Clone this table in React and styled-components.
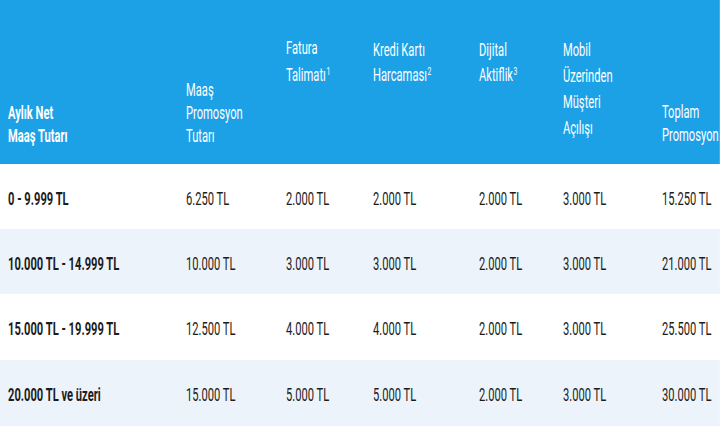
import React from "react";
import styled, { createGlobalStyle } from "styled-components";

const Global = createGlobalStyle`
  html, body { margin: 0; padding: 0; background: #ffffff; overflow: hidden; }
  body { font-family: "Roboto", "Liberation Sans", sans-serif; }
`;

/* the reference type is a tall, strongly condensed face: the whole table is
   laid out at a wider width and squeezed horizontally */
const SQUEEZE = 0.62;
const px = (v) => `${(v / SQUEEZE).toFixed(2)}px`;
const COLS = [186, 100, 87, 106, 84, 99, 58].map(px).join(" ");

const Page = styled.div`
  width: 720px;
  height: 430px;
  overflow: hidden;
  background: #ffffff;
`;

const Table = styled.div`
  width: ${px(720)};
  transform: scaleX(${SQUEEZE});
  transform-origin: 0 0;
`;

const HeaderRow = styled.div`
  display: grid;
  grid-template-columns: ${COLS};
  height: 164px;
  background: #1ca1e7;
  color: #ffffff;
`;

const HeadCell = styled.div`
  padding-top: ${(p) => p.$top}px;
  padding-left: ${(p) => (p.$first ? px(8) : 0)};
  font-size: 18px;
  line-height: ${(p) => p.$lh || 25}px;
  font-weight: ${(p) => (p.$first ? 700 : 400)};
  white-space: nowrap;
`;

const Sup = styled.sup`
  font-size: 11px;
  line-height: 0;
  vertical-align: 6px;
  margin-left: 1px;
`;

const BodyRow = styled.div`
  display: grid;
  grid-template-columns: ${COLS};
  height: ${(p) => p.$h}px;
  align-items: center;
  background: ${(p) => (p.$alt ? "#edf3fa" : "#ffffff")};
  color: #1c1c1c;
`;

const Cell = styled.div`
  padding-left: ${(p) => (p.$first ? px(8) : 0)};
  padding-top: 3px;
  font-size: 18px;
  font-weight: ${(p) => (p.$first ? 700 : 400)};
  white-space: nowrap;
`;

const headers = [
  { lines: ["Aylık Net", "Maaş Tutarı"], top: 101, lh: 23, first: true },
  { lines: ["Maaş", "Promosyon", "Tutarı"], top: 78, lh: 23 },
  { lines: ["Fatura", ["Talimatı", "1"]], top: 34, lh: 27 },
  { lines: ["Kredi Kartı", ["Harcaması", "2"]], top: 37, lh: 25 },
  { lines: ["Dijital", ["Aktiflik", "3"]], top: 37, lh: 25 },
  { lines: ["Mobil", "Üzerinden", "Müşteri", "Açılışı"], top: 37, lh: 26 },
  { lines: ["Toplam", "Promosyon"], top: 100, lh: 23 },
];

const rows = [
  ["0 - 9.999 TL", "6.250 TL", "2.000 TL", "2.000 TL", "2.000 TL", "3.000 TL", "15.250 TL"],
  ["10.000 TL - 14.999 TL", "10.000 TL", "3.000 TL", "3.000 TL", "2.000 TL", "3.000 TL", "21.000 TL"],
  ["15.000 TL - 19.999 TL", "12.500 TL", "4.000 TL", "4.000 TL", "2.000 TL", "3.000 TL", "25.500 TL"],
  ["20.000 TL ve üzeri", "15.000 TL", "5.000 TL", "5.000 TL", "2.000 TL", "3.000 TL", "30.000 TL"],
];

const heights = [65, 65, 66, 66];

export default function App() {
  return (
    <>
      <Global />
      <Page>
        <Table>
          <HeaderRow>
            {headers.map((h, i) => (
              <HeadCell key={i} $top={h.top} $lh={h.lh} $first={h.first}>
                {h.lines.map((l, j) => (
                  <div key={j}>
                    {Array.isArray(l) ? (
                      <>
                        {l[0]}
                        <Sup>{l[1]}</Sup>
                      </>
                    ) : (
                      l
                    )}
                  </div>
                ))}
              </HeadCell>
            ))}
          </HeaderRow>
          {rows.map((r, i) => (
            <BodyRow key={i} $alt={i % 2 === 1} $h={heights[i]}>
              {r.map((c, j) => (
                <Cell key={j} $first={j === 0}>
                  {c}
                </Cell>
              ))}
            </BodyRow>
          ))}
        </Table>
      </Page>
    </>
  );
}
